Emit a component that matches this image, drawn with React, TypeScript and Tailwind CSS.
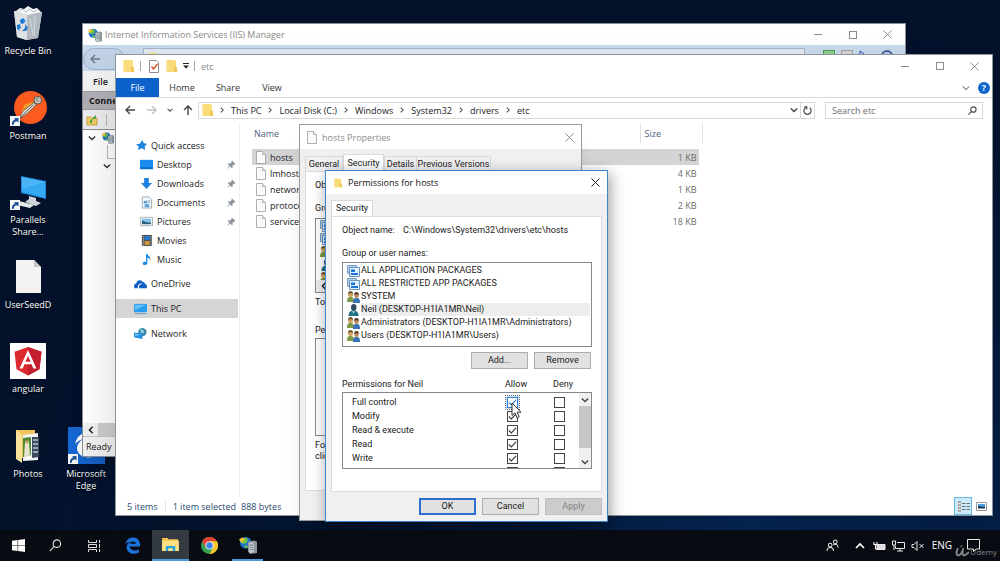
import { useState, type ReactNode } from 'react';
import clsx from 'clsx';

/* ---------- small glyphs ---------- */

function Chevron({ dir = 'down', className = 'size-[8px]' }: { dir?: 'down' | 'up' | 'left' | 'right'; className?: string }) {
  const paths = {
    down: 'M1 3l4 4 4-4',
    up: 'M1 7l4-4 4 4',
    left: 'M7 1L3 5l4 4',
    right: 'M3 1l4 4-4 4',
  };
  return (
    <svg viewBox="0 0 10 10" className={className} fill="none" stroke="currentColor" strokeWidth="1.7" aria-hidden="true">
      <path d={paths[dir]} />
    </svg>
  );
}

function Arrow({ className }: { className?: string }) {
  return (
    <svg viewBox="0 0 10 10" className={clsx('size-[10px]', className)} fill="none" stroke="currentColor" strokeWidth="1.4" aria-hidden="true">
      <path d="M10 5H1M5 1L1 5l4 4" />
    </svg>
  );
}

function CloseGlyph() {
  return (
    <svg viewBox="0 0 10 10" className="size-[9px]" stroke="currentColor" strokeWidth="1.1" aria-hidden="true">
      <path d="M.5.5l9 9M9.5.5l-9 9" />
    </svg>
  );
}

function Folder({ className = 'h-[14px] w-[11px]' }: { className?: string }) {
  return (
    <svg viewBox="0 0 11 14" className={className} aria-hidden="true">
      <path d="M0 1h8l2 1v6l1 1v4H0z" fill="#fadb7a" />
      <path d="M0 1h1.5v12H0z" fill="#fbe7a0" />
      <path d="M8 8h3v5H8z" fill="#f1c657" />
    </svg>
  );
}

function Page({ className = 'h-[13px] w-[10px]' }: { className?: string }) {
  return (
    <svg viewBox="0 0 10 13" className={className} aria-hidden="true">
      <path d="M.5.5h6l3 3v9h-9z" fill="#fbfbfb" stroke="#9a9a9a" strokeWidth=".8" />
      <path d="M6.5.5v3h3" fill="#e6e6e6" stroke="#9a9a9a" strokeWidth=".7" />
    </svg>
  );
}

function ServerGlobe({ className = 'size-[14px]' }: { className?: string }) {
  return (
    <svg viewBox="0 0 16 16" className={className} aria-hidden="true">
      <circle cx="6" cy="6" r="5.2" fill="#1d70c9" />
      <path d="M2 3c2-2 5-2 6 0L7 6 4 7 2 6zM5 8l3 1-1 2-2-1z" fill="#6fc04a" />
      <path d="M0 3l3-2 2 2-3 3z" fill="#f4c430" />
      <path d="M8 5l6-1 2 1v10l-6 1-2-2z" fill="#8c979c" />
      <path d="M9 6l4-.5v9l-4 .5z" fill="#c2cacd" />
      <path d="M9.500 8h3M9.500 10h3M9.500 12h3" stroke="#60707a" strokeWidth=".7" />
    </svg>
  );
}

function Pin() {
  return (
    <svg viewBox="0 0 10 10" className="size-[9px]" aria-hidden="true">
      <path d="M5.500.5l4 4-1 .6-.8-.2-1.600 1.800.1 1.800-.8.7L3.500 7.200.7 9.800.3 9.400l2.500-2.900L.9 4.500l.8-.8 1.800.1L5.200 2.200 5 1.300z" fill="#8b949c" />
    </svg>
  );
}

/* ---------- window chrome ---------- */

function WindowButtons() {
  return (
    <div className="flex h-full items-center text-[#8c8c8c]">
      <button type="button" aria-label="Minimize" className="flex h-full w-[35px] items-center justify-center">
        <span className="h-px w-[8px] bg-current" />
      </button>
      <button type="button" aria-label="Maximize" className="flex h-full w-[35px] items-center justify-center">
        <span className="size-[8px] border border-current" />
      </button>
      <button type="button" aria-label="Close" className="flex h-full w-[35px] items-center justify-center">
        <CloseGlyph />
      </button>
    </div>
  );
}

function PushButton({ children, primary, disabled }: { children: ReactNode; primary?: boolean; disabled?: boolean }) {
  return (
    <button
      type="button"
      disabled={disabled}
      className={clsx(
        'h-[17px] w-[57px] leading-none',
        primary && 'border-2 border-[#2a6fd0] bg-[#e1e1e1]',
        disabled && 'border border-[#bfbfbf] bg-[#cccccc] text-[#838383]',
        !primary && !disabled && 'border border-[#adadad] bg-[#e1e1e1]',
      )}
    >
      {children}
    </button>
  );
}

/* ---------- desktop icons ---------- */

function Shortcut() {
  return (
    <svg viewBox="0 0 10 10" className="absolute bottom-0 left-0 size-[10px]" aria-hidden="true">
      <path d="M0 0h10v10H0z" fill="#f4f6f8" />
      <path d="M2 9c-.5-3 1-5 3-5.300L4.200 2.300 8.500 2v4.500L7 5.200C5 5.500 3.500 6.500 4 8.500z" fill="#1b4f94" />
    </svg>
  );
}

function DesktopIcon({ label, shortcut, className, children }: { label: string; shortcut?: boolean; className?: string; children: ReactNode }) {
  return (
    <button type="button" className={clsx('flex flex-col items-center gap-[4px] text-white', className)}>
      <span className="relative flex h-[36px] w-[37px] items-center justify-center">
        {children}
        {shortcut && <Shortcut />}
      </span>
      <span className="w-[52px] text-center leading-[12px] [text-shadow:0_1px_2px_#000]">{label}</span>
    </button>
  );
}

function DesktopIcons() {
  return (
    <div className="grid h-[512px] grid-flow-col grid-cols-[56px_60px] grid-rows-6 items-start pt-[5px]">
      <DesktopIcon label="Recycle Bin">
        <svg viewBox="0 0 30 34" className="h-[34px] w-[30px]" aria-hidden="true">
          <path d="M1 5l28 1-4 26-12 2-9-3z" fill="#c9ced2" />
          <path d="M1 5l13 3v26l-10-3z" fill="#dde1e4" />
          <path d="M14 8l15-2-4 26-11 2z" fill="#b3babf" />
          <path d="M3 5l4-3 4 1 4-3 5 3 4-1 4 4-13 3z" fill="#f5f6f7" />
          <path d="M6 5l4-2 3 3 4-3 3 3 4-2" fill="none" stroke="#aab0b5" strokeWidth=".8" />
          <path d="M17 12l3 17M22 11l-1 19M6 24l6 2" stroke="#d5dadd" strokeWidth="1" />
          <path d="M7 14l3-2 3 3-2 1 1 1-4 1-1-3zM4 19l3-1 1 4-2 1 1 2-3-2zM12 18l3 4-2 3H9l3-3z" fill="#1f7ad6" />
        </svg>
      </DesktopIcon>
      <DesktopIcon label="Postman" shortcut>
        <svg viewBox="0 0 34 34" className="ml-[4px] size-[33px]" aria-hidden="true">
          <circle cx="17" cy="17" r="17" fill="#fb5b1e" />
          <circle cx="24.500" cy="9.500" r="4" fill="#c3c0b8" stroke="#5b5148" strokeWidth="1" />
          <path d="M25 7l-2 2 2 2" fill="none" stroke="#5b5148" strokeWidth=".9" />
          <path d="M8 21l3-7 9-3 2 3-7 5-6 4z" fill="#f5a02b" />
          <path d="M4 30l5-9 11-9 3 2-9 9z" fill="#dcd8ce" stroke="#5b5148" strokeWidth=".8" />
          <path d="M6 28l14-14" stroke="#5b5148" strokeWidth=".9" />
        </svg>
      </DesktopIcon>
      <DesktopIcon label="Parallels Share..." shortcut>
        <svg viewBox="0 0 36 34" className="h-[34px] w-[36px]" aria-hidden="true">
          <path d="M11 1l25 5v18l-25-6z" fill="#1a86dc" />
          <path d="M12 2l23 5v16l-23-6z" fill="#35a8f2" />
          <path d="M12 2l23 5L12 14z" fill="#58bcf8" opacity=".6" />
          <path d="M19 21l7 2v3l5 2-5 3-11-4 4-3z" fill="#cfd5d9" />
          <path d="M9 26l15 4-4 3-13-3z" fill="#e6e9eb" />
        </svg>
      </DesktopIcon>
      <DesktopIcon label="UserSeedD">
        <svg viewBox="0 0 25 33" className="h-[33px] w-[25px]" aria-hidden="true">
          <path d="M0 0h18l7 7v26H0z" fill="#f3f3f3" />
          <path d="M18 0v7h7z" fill="#c6c6c6" />
        </svg>
      </DesktopIcon>
      <DesktopIcon label="angular">
        <svg viewBox="0 0 36 36" className="size-[36px]" aria-hidden="true">
          <path d="M0 0h36v36H0z" fill="#fff" />
          <path d="M18 4l13.500 4.700-2 17.500L18 32.500 6.500 26.200l-2-17.500z" fill="#dd2a2f" />
          <path d="M18 4l13.500 4.700-2 17.500L18 32.500z" fill="#c3202f" />
          <path d="M18 7L9.500 25.500h3.200l1.700-4.200h7.200l1.700 4.200h3.200zm0 6l2.600 5.700h-5.200z" fill="#fff" />
        </svg>
      </DesktopIcon>
      <DesktopIcon label="Photos">
        <svg viewBox="0 0 26 34" className="h-[34px] w-[26px]" aria-hidden="true">
          <path d="M1 1h19v28H1z" fill="#efc55c" />
          <path d="M8 6l15-2v27l-15 1z" fill="#f6f6f6" />
          <path d="M17 8l7 0v20l-7 1z" fill="#3b4a5c" />
          <path d="M18 11h5M18 15h5M18 19h5M18 23h5" stroke="#b9c6d0" strokeWidth="1.500" />
          <path d="M8 9l8-1v18l-8 2z" fill="#4d8a35" />
          <path d="M10 14c0-3 4-3 4 0l1 12-6 2z" fill="#e9e2cf" />
          <circle cx="12" cy="13" r="1.700" fill="#caa15a" />
          <path d="M1 1l6 5v28l-6-4z" fill="#fbe29a" />
        </svg>
      </DesktopIcon>
      <DesktopIcon label="Microsoft Edge" shortcut className="col-start-2 row-start-6">
        <svg viewBox="0 0 37 37" className="size-[37px]" aria-hidden="true">
          <path d="M0 0h37v37H0z" fill="#1668d3" />
          <path d="M7 17C9 8 16 5 20 5c8 0 11 6 11 14H15c0 6 9 8 14 4v5c-8 5-19 2-20-6 0-5 3-8 6-10-4 1-6 3-8 5z" fill="#fff" />
        </svg>
      </DesktopIcon>
    </div>
  );
}

/* ---------- IIS manager ---------- */

function IisWindow() {
  return (
    <section aria-label="Internet Information Services (IIS) Manager" className="absolute top-[23px] right-[94px] left-[82px] flex h-[434px] flex-col border border-[#8a8f98] bg-white shadow-xl">
      <header className="flex h-[21px] shrink-0 items-center gap-[3px] pl-[5px] text-[#8a8a8a]">
        <ServerGlobe />
        <span className="flex-1">Internet Information Services (IIS) Manager</span>
        <WindowButtons />
      </header>
      <div className="flex h-[26px] shrink-0 items-start gap-[18px] bg-[#c9d9ec] pt-[3px] pr-[12px]">
        <div className="flex h-[22px] w-[42px] items-center rounded-full border border-[#9fb2cb] bg-[#c0d1e6] pl-[6px] text-[#6c7684]">
          <Arrow />
        </div>
        <div className="flex h-[20px] flex-1 items-center gap-[20px] border border-[#a7b4c5] bg-[#dfe8f3] pl-[4px] font-bold">
          <Folder className="size-[12px]" />
          <span className="leading-none">DESKTOP-H1IA1MR</span>
        </div>
        <div className="flex gap-[6px] pt-[2px]">
          <span className="size-[12px] border border-[#4f9b56] bg-[#8ed08f]" />
          <span className="size-[12px] border border-[#a4a4a4] bg-[#d3d3d3]" />
          <svg viewBox="0 0 12 12" className="size-[12px]" aria-hidden="true"><path d="M1 11V1l4 3 6 6z" fill="#cfe0ff" stroke="#2a44b5" /></svg>
          <span className="ml-[4px] size-[12px] rounded-full border-2 border-[#4a5f90] bg-[#b9cdf2]" />
        </div>
      </div>
      <div className="flex h-[20px] shrink-0 items-center bg-[#f1f1f1] pl-[10px] font-semibold text-[#222]">File</div>
      <div className="flex h-[19px] shrink-0 items-center border-y border-[#99999f] bg-[#aeaeb4] pl-[6px] font-bold text-[#1b1b1b]">Connections</div>
      <div className="flex h-[20px] shrink-0 items-center gap-[8px] border-b border-[#8d8d95] bg-[#ececee] pl-[3px]">
        <svg viewBox="0 0 12 12" className="size-[12px]" aria-hidden="true">
          <path d="M1 3h4l1 1h5v7H1z" fill="#f1cf63" stroke="#b48e2a" strokeWidth=".7" />
          <path d="M4 9c0-3 1-4 3-4V3.500L10 1 9.500 5 8 4.500C6 5 6 7 6 9z" fill="#36a044" />
        </svg>
        <span className="h-[12px] w-px bg-[#b5b5b5]" />
      </div>
      <div className="flex-1 pt-[1px] pl-[5px] text-[#333]">
        <div className="flex h-[14px] items-center gap-[6px]">
          <Chevron />
          <ServerGlobe className="size-[12px]" />
        </div>
        <div className="ml-[19px] flex h-[14px] w-[40px] border-b border-l border-[#b9b9b9]" />
        <div className="flex h-[14px] items-center pl-[15px]"><Chevron /></div>
      </div>
      <div className="flex h-[13px] shrink-0 items-center bg-[#f0f0f0] pl-[4px]">
        <Chevron dir="left" />
        <span className="ml-[3px] h-full w-[200px] bg-[#cdcdcd]" />
      </div>
      <footer className="flex h-[20px] shrink-0 items-center border-t border-[#c4c4c4] bg-[#f1f1f1] pl-[3px]">Ready</footer>
    </section>
  );
}

/* ---------- file explorer ---------- */

const quickAccess = [
  { name: 'Desktop', pinned: true, icon: <><path d="M0 2h14v10H0z" fill="#1b8df0" /><path d="M0 10h14v2H0z" fill="#0d6bc4" /></> },
  { name: 'Downloads', pinned: true, icon: <path d="M4.500 1h5v5.500H13L7 13 1 6.500h3.500z" fill="#1b82e2" /> },
  { name: 'Documents', pinned: true, icon: <><path d="M2.500 1h7l3 3v9h-10z" fill="#f6f9fb" stroke="#8296a6" strokeWidth=".8" /><path d="M4 5h4v3H4zM5 9h5v3H5z" fill="#5aa3d8" /><path d="M8.500 5H11M8.500 7H11" stroke="#7e93a3" strokeWidth=".8" /></> },
  { name: 'Pictures', pinned: true, icon: <><path d="M.5 2.500h13v9H.5z" fill="#fff" stroke="#9aa5ad" strokeWidth=".9" /><path d="M2 4h10v3.500H2z" fill="#7fc0ea" /><path d="M2 10V6l4 1.500 6 .5v2z" fill="#256178" /></> },
  { name: 'Movies', pinned: false, icon: <><path d="M2 1h11v12H2z" fill="#4c5257" /><path d="M5 2h5.500v4.500H5z" fill="#2a7cd0" /><path d="M5 7.500h5.500V12H5z" fill="#c9963e" /><path d="M3.500 2v11M12 2v11" stroke="#d4d8da" strokeDasharray="1 1" /></> },
  { name: 'Music', pinned: false, icon: <path d="M6.500 1H8c.5 2.500 4 3 3 7-.5-2-1.500-2.500-3-3v5.500C8 12.500 6.500 13 5 13c-3 0-2.500-3.500 0-3.500.700 0 1 .2 1.500.4z" fill="#1b8ae6" /> },
];

const places = [
  { name: 'OneDrive', icon: <path d="M0 11c0-3 1-4 2.500-4C3 3.500 7 2.500 9 5c2 0 2.500 1 2.700 2.200C13.500 7.500 14 9 14 12H5.500C5 9 6.500 7.500 9 7.500 6.500 6 4 8 4 12H1z" fill="#0f5fc2" /> },
  { name: 'This PC', icon: <><path d="M0 2h14v9H0z" fill="#2a9df0" /><path d="M1 3h12L1 9z" fill="#68c0f8" /><path d="M1 12.500h12" stroke="#7295ad" /></> },
  { name: 'Network', icon: <><circle cx="9" cy="5.500" r="4.500" fill="#3a87a8" /><path d="M7 2l4 2-1 3-3-1z" fill="#8fd0df" /><path d="M0 6l9 1v6l-9-2z" fill="#2090e4" /><path d="M1 7l7 1-7 2z" fill="#66bdf6" /></> },
];

const files = [
  { name: 'hosts', size: '1 KB' },
  { name: 'lmhosts.sam', size: '4 KB' },
  { name: 'networks', size: '1 KB' },
  { name: 'protocol', size: '2 KB' },
  { name: 'services', size: '18 KB' },
];

const crumbs = ['This PC', 'Local Disk (C:)', 'Windows', 'System32', 'drivers', 'etc'];

function ExplorerWindow() {
  const [selected, setSelected] = useState('hosts');

  return (
    <section aria-label="etc" className="absolute top-[54px] right-[7px] bottom-[14px] left-[115px] flex flex-col border border-[#8f949b] bg-white shadow-2xl">
      <header className="flex h-[23px] shrink-0 items-center pb-[1px] pl-[7px] text-[#8a8a8a]">
        <Folder />
        <span className="ml-[6px] h-[10px] w-px bg-[#a8a8a8]" />
        <svg viewBox="0 0 10 13" className="ml-[8px] h-[13px] w-[10px]" aria-hidden="true">
          <path d="M.5.5h7l2 2v10h-9z" fill="#fff" stroke="#8e8e8e" />
          <path d="M2.500 6.500L4.500 9l4-5" fill="none" stroke="#e0572a" strokeWidth="1.500" />
        </svg>
        <Folder className="ml-[7px] h-[14px] w-[11px]" />
        <svg viewBox="0 0 6 6" className="ml-[6px] size-[6px]" aria-hidden="true"><path d="M0 .5h6" stroke="#222" /><path d="M0 2.500h6L3 5.500z" fill="#222" /></svg>
        <span className="ml-[5px] h-[10px] w-px bg-[#a8a8a8]" />
        <span className="ml-[6px] flex-1">etc</span>
        <WindowButtons />
      </header>

      <div className="flex h-[20px] shrink-0 items-stretch border-b border-[#dadbdc] text-[#333]">
        <button type="button" className="w-[43px] bg-[#0d62c9] text-white">File</button>
        <button type="button" className="w-[46px]">Home</button>
        <button type="button" className="w-[46px]">Share</button>
        <button type="button" className="w-[42px]">View</button>
        <div className="ml-auto flex items-center gap-[8px] pr-[2px]">
          <Chevron className="size-[8px] text-[#9a9a9a]" />
          <button type="button" aria-label="Help" className="size-[12px] rounded-full bg-[#0d66cc] text-center leading-[12px] font-bold text-white">?</button>
        </div>
      </div>

      <div className="flex h-[24px] shrink-0 items-center pr-[9px] pl-[9px]">
        <button type="button" aria-label="Back" className="w-[22px] text-[#444]"><Arrow /></button>
        <button type="button" aria-label="Forward" className="w-[20px] text-[#c2c2c2]"><Arrow className="rotate-180" /></button>
        <button type="button" aria-label="Recent locations" className="w-[16px] text-[#555]"><Chevron className="size-[6px]" /></button>
        <button type="button" aria-label="Up" className="w-[15px] text-[#444]"><Arrow className="rotate-90" /></button>
        <nav aria-label="Address" className="flex h-[17px] flex-1 items-center border border-[#d9d9d9] pl-[3px]">
          <Folder />
          {crumbs.map((crumb) => (
            <span key={crumb} className="flex items-center">
              <span className="flex w-[18px] justify-center text-[#444]"><Chevron dir="right" className="size-[6px]" /></span>
              <a href="#" className="text-[#1a1a1a]">{crumb}</a>
            </span>
          ))}
          <button type="button" aria-label="Previous locations" className="mr-[2px] ml-auto text-[#444]"><Chevron /></button>
          <button type="button" aria-label="Refresh" className="flex h-full w-[14px] items-center justify-center border-l border-[#d9d9d9]">
            <svg viewBox="0 0 10 10" className="size-[9px]" fill="none" stroke="#444" strokeWidth="1.300" aria-hidden="true"><path d="M3 1.800a4 4 0 104.500.3M1.500 1h2.700v2.800" /></svg>
          </button>
        </nav>
        <label className="ml-[10px] flex h-[17px] w-[158px] items-center border border-[#d9d9d9] pr-[5px] pl-[6px]">
          <input type="search" aria-label="Search etc" placeholder="Search etc" className="w-0 flex-1 outline-none placeholder:text-[#6d6d6d]" />
          <svg viewBox="0 0 10 10" className="size-[9px]" fill="none" stroke="#444" strokeWidth="1.200" aria-hidden="true"><circle cx="6" cy="4" r="3" /><path d="M4 6L.5 9.500" /></svg>
        </label>
      </div>

      <div className="flex min-h-0 flex-1 pt-[1px]">
        <aside className="w-[124px] shrink-0 border-r border-[#efefef] pt-[13px] text-[#1c1c1c]">
          <div className="flex h-[19px] items-center gap-[4px] pl-[20px]">
            <svg viewBox="0 0 12 12" className="size-[11px]" aria-hidden="true"><path d="M7 0l1.500 3.500L12 4 9.500 7l.5 4-3.500-2L2 11l1-4-3-2.500 4-.5z" fill="#1d82dd" /></svg>
            Quick access
          </div>
          <ul>
            {quickAccess.map((item) => (
              <li key={item.name} className="flex h-[19px] items-center gap-[4px] pr-[3px] pl-[24px]">
                <svg viewBox="0 0 14 14" className="size-[13px]" aria-hidden="true">{item.icon}</svg>
                <span className="flex-1">{item.name}</span>
                {item.pinned && <Pin />}
              </li>
            ))}
          </ul>
          <ul className="mt-[5px] space-y-[6px]">
            {places.map((item) => (
              <li key={item.name} className={clsx('mr-[1px] flex h-[19px] items-center gap-[4px] pl-[18px]', item.name === 'This PC' && 'bg-[#d5d5d5]')}>
                <svg viewBox="0 0 14 14" className="size-[13px]" aria-hidden="true">{item.icon}</svg>
                {item.name}
              </li>
            ))}
          </ul>
        </aside>

        <div className="pl-[12px]">
          <table className="w-[451px] table-fixed text-left">
            <colgroup>
              <col className="w-[388px]" />
              <col />
              <col className="w-[3px]" />
            </colgroup>
            <thead className="text-[#4c6380]">
              <tr className="h-[20px]">
                <th className="border-r border-[#e2e2e2] pl-[2px] font-normal">Name</th>
                <th colSpan={2} className="border-r border-[#e2e2e2] pl-[4px] font-normal">Size</th>
              </tr>
            </thead>
            <tbody>
              <tr className="h-[6px]" aria-hidden="true"><td colSpan={3} /></tr>
              {files.map((file) => (
                <tr key={file.name} onClick={() => setSelected(file.name)} className="h-[16px]">
                  <td className={clsx('pl-[4px]', selected === file.name && 'bg-[#d4d4d4]')}>
                    <span className="flex items-center gap-[4px]"><Page /> {file.name}</span>
                  </td>
                  <td className={clsx('pr-[3px] text-right text-[#6d6d6d]', selected === file.name && 'bg-[#d4d4d4]')}>{file.size}</td>
                  <td />
                </tr>
              ))}
            </tbody>
          </table>
        </div>
      </div>

      <footer className="flex h-[18px] shrink-0 items-center pr-[5px] pl-[11px] text-[#2b4a6f]">
        <span>5 items</span>
        <span className="mx-[7px] h-[10px] w-px bg-[#e0e0e0]" />
        <span>1 item selected</span>
        <span className="ml-[5px]">888 bytes</span>
        <button type="button" aria-label="Details view" className="ml-auto flex size-[18px] items-center justify-center border border-[#6bbbe0] bg-[#cbe9f8]">
          <svg viewBox="0 0 13 11" className="h-[11px] w-[13px]" aria-hidden="true"><path d="M1 0h3v11H1z" fill="#a8a8a8" /><path d="M1.500 2.500h2M1.500 5.500h2M1.500 8.500h2" stroke="#eee" /><path d="M5 2.500h8M5 5.500h8M5 8.500h8" stroke="#65727c" strokeDasharray="3.500 1" /></svg>
        </button>
        <button type="button" aria-label="Large icons view" className="ml-[4px]">
          <svg viewBox="0 0 11 9" className="h-[9px] w-[11px]" aria-hidden="true"><path d="M.5.5h10v8H.5z" fill="#fff" stroke="#999" /><path d="M2 2h7v3H2z" fill="#4aa0e8" /><path d="M2 4l7 1v1.500H2z" fill="#16374f" /></svg>
        </button>
      </footer>
    </section>
  );
}

/* ---------- security dialogs ---------- */

type PrincipalKind = 'package' | 'group' | 'user';

const principals: { name: string; kind: PrincipalKind }[] = [
  { name: 'ALL APPLICATION PACKAGES', kind: 'package' },
  { name: 'ALL RESTRICTED APP PACKAGES', kind: 'package' },
  { name: 'SYSTEM', kind: 'group' },
  { name: 'Neil (DESKTOP-H1IA1MR\\Neil)', kind: 'user' },
  { name: 'Administrators (DESKTOP-H1IA1MR\\Administrators)', kind: 'group' },
  { name: 'Users (DESKTOP-H1IA1MR\\Users)', kind: 'group' },
];

function PrincipalIcon({ kind }: { kind: PrincipalKind }) {
  return (
    <svg viewBox="0 0 13 12" className="h-[12px] w-[13px] shrink-0" aria-hidden="true">
      {kind === 'package' && (
        <>
          <path d="M.5.5h9v8h-9z" fill="#b4d2ef" stroke="#7a9cc0" />
          <path d="M2.500 2.500h10v9h-10z" fill="#e3effa" stroke="#6c93bd" />
          <path d="M4 4.500h4v2.500H4zM4 8h7v2H4z" fill="#1c78d8" />
        </>
      )}
      {kind === 'group' && (
        <>
          <path d="M0 11c0-4 1-5 3.500-5S7 7 7 11z" fill="#7c9a45" />
          <circle cx="3.500" cy="3.500" r="2.500" fill="#d0a25c" />
          <path d="M1 3c0-4 5-4 5 0-1-1-4-1-5 0z" fill="#6b4f28" />
          <path d="M6 12c0-4 1-5 3.500-5s3.500 1 3.500 5z" fill="#3672b5" />
          <circle cx="9.500" cy="4.800" r="2.300" fill="#c08d5a" />
          <path d="M7 4c0-4 5-4 5 0-1-1-4-1-5 0z" fill="#453426" />
        </>
      )}
      {kind === 'user' && (
        <>
          <path d="M1.500 12c0-4 2-5.500 5-5.500s5 1.500 5 5.500z" fill="#1f7187" />
          <path d="M4 3c0-4 5.500-4 5.500 0 0 2.500-1 4-2.700 4S4 5.500 4 3z" fill="#2d4d60" />
          <path d="M5 7l1.500 3L8 7z" fill="#8bd1df" />
        </>
      )}
    </svg>
  );
}

function PropertiesWindow() {
  return (
    <section aria-label="hosts Properties" className="absolute top-[124px] left-[299px] flex h-[397px] w-[283px] flex-col border border-[#9b9b9b] bg-[#f0f0f0] shadow-xl">
      <header className="flex h-[24px] shrink-0 items-center gap-[5px] bg-white pr-[7px] pl-[7px] text-[#8a8a8a]">
        <Page />
        <span className="flex-1">hosts Properties</span>
        <button type="button" aria-label="Close"><CloseGlyph /></button>
      </header>
      <div className="flex flex-1 flex-col px-[5px] pt-[5px] pb-[29px] font-[Roboto,'Liberation_Sans',sans-serif] whitespace-nowrap">
        <div role="tablist" className="flex h-[17px] shrink-0 items-end">
          <button type="button" role="tab" className="h-[15px] w-[38px] border border-b-0 border-[#d9d9d9]">General</button>
          <button type="button" role="tab" aria-selected="true" className="h-[17px] w-[41px] border border-b-0 border-[#d9d9d9] bg-white">Security</button>
          <button type="button" role="tab" className="h-[15px] w-[33px] border border-b-0 border-[#d9d9d9]">Details</button>
          <button type="button" role="tab" className="h-[15px] w-[74px] border border-b-0 border-l-0 border-[#d9d9d9]">Previous Versions</button>
        </div>
        <div className="flex-1 border border-[#dcdcdc] bg-white px-[9px] pt-[7px]">
          <p className="h-[23px]">Object name:</p>
          <p className="h-[16px]">Group or user names:</p>
          <div className="h-[75px] border border-[#828790]">
            <ul className="h-[61px] overflow-hidden pt-[1px] pl-[4px]">
              {principals.slice(0, 5).map((p) => (
                <li key={p.name} className="h-[13px]"><PrincipalIcon kind={p.kind} /></li>
              ))}
            </ul>
            <div className="flex h-[12px] items-center bg-[#ededed] pl-[4px]"><Chevron dir="left" /></div>
          </div>
          <p className="mt-[3px] h-[28px]">To change permissions, click Edit.</p>
          <p className="h-[14px]">Permissions</p>
          <div className="h-[98px] border border-[#828790]" />
          <p className="mt-[4px] leading-[11px]">For special permissions,<br />click Advanced.</p>
        </div>
      </div>
    </section>
  );
}

function CheckBox({ checked, onChange, label, hot }: { checked: boolean; onChange: () => void; label: string; hot?: boolean }) {
  return (
    <label className={clsx('grid size-[13px] place-items-center', hot && 'bg-[#cfe3f7] outline-1 outline-dotted outline-[#666]')}>
      <input
        type="checkbox"
        aria-label={label}
        checked={checked}
        onChange={onChange}
        className={clsx('col-start-1 row-start-1 size-[11px] appearance-none border bg-white', hot ? 'border-[#2d7fd3]' : 'border-[#444]')}
      />
      {checked && (
        <svg viewBox="0 0 10 10" className={clsx('pointer-events-none col-start-1 row-start-1 size-[9px]', hot ? 'text-[#2d7fd3]' : 'text-[#333]')} fill="none" stroke="currentColor" strokeWidth="1.200" aria-hidden="true">
          <path d="M1 5l2.700 2.700L9 2.200" />
        </svg>
      )}
    </label>
  );
}

const permissionNames = ['Full control', 'Modify', 'Read & execute', 'Read', 'Write'];

function PermissionsDialog() {
  const [current, setCurrent] = useState(3);
  const [allow, setAllow] = useState([true, true, true, true, true, false]);
  const [deny, setDeny] = useState([false, false, false, false, false, false]);

  const toggle = (list: boolean[], index: number) => list.map((value, i) => (i === index ? !value : value));

  return (
    <section role="dialog" aria-label="Permissions for hosts" className="absolute top-[170px] left-[325px] flex w-[283px] flex-col border border-[#3b86cf] bg-[#f0f0f0] shadow-[2px_4px_14px_rgba(0,0,0,0.4)]">
      <header className="flex h-[23px] items-center gap-[6px] bg-white pr-[7px] pl-[8px] text-[#111]">
        <Folder className="h-[10px] w-[8px]" />
        <span className="flex-1">Permissions for hosts</span>
        <button type="button" aria-label="Close" className="text-[#222]"><CloseGlyph /></button>
      </header>
      <div className="px-[5px] pt-[6px] font-[Roboto,'Liberation_Sans',sans-serif] whitespace-nowrap">
        <button type="button" role="tab" aria-selected="true" className="block h-[16px] w-[42px] border border-b-0 border-[#d9d9d9] bg-white">Security</button>
        <div className="h-[276px] border border-[#dcdcdc] bg-white pt-[7px] pr-[9px] pl-[10px]">
          <p className="flex h-[23px]">
            <span className="w-[61px]">Object name:</span>
            <span>C:\Windows\System32\drivers\etc\hosts</span>
          </p>
          <p className="h-[15px]">Group or user names:</p>
          <ul role="listbox" aria-label="Group or user names" className="h-[85px] border border-[#828790] pt-[1px] pr-[1px] pl-[4px]">
            {principals.map((p, i) => (
              <li key={p.name} role="option" aria-selected={current === i} onClick={() => setCurrent(i)} className="flex h-[13px] items-center gap-[1px]">
                <PrincipalIcon kind={p.kind} />
                <span className={clsx('flex-1', current === i && 'bg-[#ededed]')}>{p.name}</span>
              </li>
            ))}
          </ul>
          <div className="mt-[5px] flex justify-end gap-[6px] pr-[1px]">
            <PushButton>Add...</PushButton>
            <PushButton>Remove</PushButton>
          </div>
          <div className="mt-[9px] flex h-[14px]">
            <span className="flex-1">Permissions for Neil</span>
            <span className="w-[48px]">Allow</span>
            <span className="w-[39px]">Deny</span>
          </div>
          <div className="flex h-[77px] overflow-hidden border border-[#828790]">
            <table className="h-[84px] flex-1 table-fixed">
              <tbody>
                <tr className="h-[2px]" aria-hidden="true"><td colSpan={3} /></tr>
                {allow.map((_, i) => (
                  <tr key={i} className="h-[14px]">
                    <th scope="row" className="pl-[9px] text-left font-normal">{permissionNames[i]}</th>
                    <td className="w-[47px]">
                      <CheckBox label={`Allow ${permissionNames[i] ?? 'special'}`} checked={allow[i]} onChange={() => setAllow(toggle(allow, i))} hot={i === 0} />
                    </td>
                    <td className="w-[26px]">
                      <CheckBox label={`Deny ${permissionNames[i] ?? 'special'}`} checked={deny[i]} onChange={() => setDeny(toggle(deny, i))} />
                    </td>
                  </tr>
                ))}
              </tbody>
            </table>
            <div className="flex w-[12px] flex-col items-center bg-[#f0f0f0] text-[#444]">
              <span className="flex h-[13px] items-center"><Chevron /></span>
              <span className="h-[42px] w-full bg-[#c6c6c6]" />
              <span className="mt-auto flex h-[13px] items-center"><Chevron /></span>
            </div>
          </div>
        </div>
        <div className="flex justify-end gap-[6px] py-[6px]">
          <PushButton primary>OK</PushButton>
          <PushButton>Cancel</PushButton>
          <PushButton disabled>Apply</PushButton>
        </div>
      </div>
    </section>
  );
}

function Cursor() {
  return (
    <svg viewBox="0 0 11 17" className="pointer-events-none absolute top-[402px] left-[511px] h-[17px] w-[11px]" aria-hidden="true">
      <path d="M1 1v12.500l3-2.700 2 5 2.200-1-2-4.600H10z" fill="#fff" stroke="#222" strokeWidth=".9" />
    </svg>
  );
}

/* ---------- taskbar ---------- */

function Taskbar() {
  return (
    <footer className="relative flex h-[31px] shrink-0 items-stretch bg-[#080c12] text-white">
      <button type="button" aria-label="Start" className="flex w-[36px] items-center justify-center">
        <svg viewBox="0 0 14 14" className="size-[13px]" fill="#fff" aria-hidden="true"><path d="M0 2l6-.9v5.600H0zM6.600 1L14 0v6.700H6.600zM0 7.300h6v5.600L0 12zM6.600 7.300H14V14l-7.400-1z" /></svg>
      </button>
      <button type="button" aria-label="Search" className="flex w-[38px] items-center justify-center">
        <svg viewBox="0 0 14 14" className="size-[13px]" fill="none" stroke="#ddd" strokeWidth="1.200" aria-hidden="true"><circle cx="8.500" cy="5" r="4" /><path d="M5.500 8L1 13" /></svg>
      </button>
      <button type="button" aria-label="Task view" className="flex w-[39px] items-center justify-center">
        <svg viewBox="0 0 14 14" className="size-[14px]" fill="none" stroke="#ddd" aria-hidden="true"><path d="M1.500 1v2.500h8V1M1.500 13v-2.500h8V13M1.500 5.500h8v3h-8zM12.500 1v3M12.500 10v3M12.500 5v4" /></svg>
      </button>
      <button type="button" aria-label="Microsoft Edge" className="flex w-[39px] items-center justify-center">
        <svg viewBox="0 0 16 16" className="size-[17px]" aria-hidden="true"><path d="M1 7C2 3 5 .5 8.500.5 13 .5 15.500 4 15.200 9H5.300c.2 4 6 4.500 8.700 2.500v3c-5 2.500-11 1-11.500-4.500C2.500 7 4 5.500 6 4.500 4 4.500 2 5.500 1 7zm4.500-.6h5.700C11 3.500 6 3.500 5.500 6.400z" fill="#1b73dc" /></svg>
      </button>
      <button type="button" aria-label="File Explorer" className="flex w-[37px] items-center justify-center border-b-2 border-[#4b9be0] bg-[#333a42]">
        <svg viewBox="0 0 18 16" className="h-[15px] w-[17px]" aria-hidden="true"><path d="M0 1h6l1 1.500h10V15H0z" fill="#f2c54d" /><path d="M0 4h18v11H0z" fill="#fbdf82" /><path d="M4 15V9.500h10V15h-2.500v-3h-5v3z" fill="#1fa2df" /></svg>
      </button>
      <button type="button" aria-label="Google Chrome" className="flex w-[40px] items-center justify-center">
        <svg viewBox="0 0 18 18" className="size-[17px]" aria-hidden="true">
          <circle cx="9" cy="9" r="9" fill="#35a351" />
          <path d="M1.200 4.500A9 9 0 0116.800 4.500H9L5.100 11.200z" fill="#e24334" />
          <path d="M16.800 4.500A9 9 0 019 18l3.900-6.700L9 4.500z" fill="#fbc62c" />
          <circle cx="9" cy="9" r="4.300" fill="#fff" />
          <circle cx="9" cy="9" r="3.400" fill="#3f80e8" />
        </svg>
      </button>
      <button type="button" aria-label="IIS Manager" className="ml-[3px] flex w-[31px] items-center justify-center border-b-2 border-[#4b9be0]">
        <ServerGlobe className="size-[18px]" />
      </button>

      <div className="ml-auto flex items-center pr-[20px]">
        <svg viewBox="0 0 14 14" className="mr-[16px] size-[13px]" fill="none" stroke="#e6e6e6" strokeWidth="1.100" aria-hidden="true">
          <circle cx="4.500" cy="6.500" r="2" /><path d="M1 13c0-5 7-5 7 0" /><circle cx="10" cy="3" r="2" /><path d="M8 6.500c3-2 5 0 5 3" />
        </svg>
        <Chevron dir="up" className="mr-[8px] size-[10px]" />
        <svg viewBox="0 0 13 10" className="mr-[6px] h-[10px] w-[13px]" aria-hidden="true"><path d="M4 3.500h8v5H4z" fill="#ddd" stroke="#eee" /><path d="M1 1v2.500h3V1M2.500 3.500V8H4" fill="none" stroke="#fff" strokeWidth="1.100" /></svg>
        <svg viewBox="0 0 13 12" className="mr-[6px] h-[12px] w-[13px]" fill="none" stroke="#e8e8e8" aria-hidden="true"><path d="M5 2.500h7.500v6H3.500V6M8 8.500V11M5 11h6M.5 1h3v4h-3zM2 5v5" /></svg>
        <svg viewBox="0 0 13 12" className="mr-[8px] h-[12px] w-[13px]" fill="none" stroke="#e8e8e8" aria-hidden="true"><path d="M1 4.500h2L6 1.500v9l-3-3H1zM8.500 4l4 4M12.500 4l-4 4" /></svg>
        <span className="mr-[15px] text-[10px]">ENG</span>
        <svg viewBox="0 0 13 13" className="h-[13px] w-[13px]" fill="none" stroke="#e8e8e8" aria-hidden="true"><path d="M.5.5h12v9.500H9L6.500 12.500V10h-6z" /></svg>
      </div>
      <div className="absolute right-[3px] bottom-[4px] flex items-end text-[#a7a9ad]/80">
        <svg viewBox="0 0 16 12" className="h-[12px] w-[15px]" fill="none" stroke="currentColor" strokeWidth="2" aria-hidden="true"><path d="M3 3C1 8 1 11 4 10.500S8 6 9 3c-2 5-1 8 1 7.500s3-2 5-3" /><path d="M5 2l3-2" strokeWidth="1" /></svg>
        <span className="text-[8px] leading-[10px]">Udemy</span>
      </div>
    </footer>
  );
}

export default function App() {
  return (
    <div className="flex h-screen w-full flex-col overflow-hidden font-['Open_Sans','Noto_Sans',sans-serif] text-[9px] leading-[13px] text-[#1a1a1a]">
      <main className="relative min-h-0 flex-1 bg-[#03132e] bg-[radial-gradient(ellipse_at_75%_100%,#06295c_0%,#041a3d_35%,#03112a_70%)]">
        <DesktopIcons />
        <IisWindow />
        <ExplorerWindow />
        <PropertiesWindow />
        <PermissionsDialog />
        <Cursor />
      </main>
      <Taskbar />
    </div>
  );
}
